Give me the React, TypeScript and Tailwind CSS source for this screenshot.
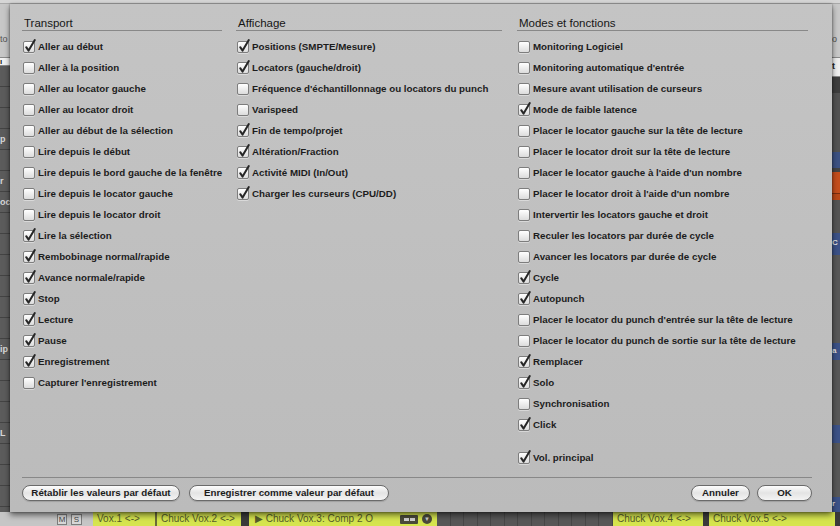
import React from 'react';

type Item = [string, boolean];

const transport: Item[] = [
  ['Aller au début', true],
  ['Aller à la position', false],
  ['Aller au locator gauche', false],
  ['Aller au locator droit', false],
  ['Aller au début de la sélection', false],
  ['Lire depuis le début', false],
  ['Lire depuis le bord gauche de la fenêtre', false],
  ['Lire depuis le locator gauche', false],
  ['Lire depuis le locator droit', false],
  ['Lire la sélection', true],
  ['Rembobinage normal/rapide', true],
  ['Avance normale/rapide', true],
  ['Stop', true],
  ['Lecture', true],
  ['Pause', true],
  ['Enregistrement', true],
  ["Capturer l'enregistrement", false],
];

const affichage: Item[] = [
  ['Positions (SMPTE/Mesure)', true],
  ['Locators (gauche/droit)', true],
  ["Fréquence d'échantillonnage ou locators du punch", false],
  ['Varispeed', false],
  ['Fin de tempo/projet', true],
  ['Altération/Fraction', true],
  ['Activité MIDI (In/Out)', true],
  ['Charger les curseurs (CPU/DD)', true],
];

const modes: Item[] = [
  ['Monitoring Logiciel', false],
  ["Monitoring automatique d'entrée", false],
  ['Mesure avant utilisation de curseurs', false],
  ['Mode de faible latence', true],
  ['Placer le locator gauche sur la tête de lecture', false],
  ['Placer le locator droit sur la tête de lecture', false],
  ["Placer le locator gauche à l'aide d'un nombre", false],
  ["Placer le locator droit à l'aide d'un nombre", false],
  ['Intervertir les locators gauche et droit', false],
  ['Reculer les locators par durée de cycle', false],
  ['Avancer les locators par durée de cycle', false],
  ['Cycle', true],
  ['Autopunch', true],
  ["Placer le locator du punch d'entrée sur la tête de lecture", false],
  ['Placer le locator du punch de sortie sur la tête de lecture', false],
  ['Remplacer', true],
  ['Solo', true],
  ['Synchronisation', false],
  ['Click', true],
];

const font = { fontFamily: '"Liberation Sans", Arial, sans-serif' };

const Checkbox: React.FC<{ checked: boolean }> = ({ checked }) => (
  <span className="relative w-[12px] h-[12px] shrink-0 rounded-[2px] border border-[#7d7d7d] bg-linear-to-b from-[#ffffff] to-[#dcdcdc] shadow-[0_1px_0_rgba(255,255,255,0.4)]">
    {checked && (
      <svg className="absolute left-[0px] top-[-3px] overflow-visible" width="12" height="14" viewBox="0 0 12 14">
        <path d="M2.2 8.2 L4.6 11.6 L10.8 1.0" fill="none" stroke="#262626" strokeWidth="2" strokeLinecap="round" strokeLinejoin="round" />
      </svg>
    )}
  </span>
);

const Row: React.FC<{ item: Item }> = ({ item }) => (
  <div className="flex items-center h-[21px] pl-[1px] gap-[3px]">
    <Checkbox checked={item[1]} />
    <span className="text-[9.75px] leading-[12px] font-bold text-[#1c1c1c] whitespace-nowrap">{item[0]}</span>
  </div>
);

const Column: React.FC<{ title: string; items: Item[]; width: string; extra?: Item }> = ({ title, items, width, extra }) => (
  <div className={`flex flex-col ${width}`}>
    <div className="h-[15px] border-b border-[#888888] pl-[2px] text-[11.5px] leading-[14px] text-[#161616]">{title}</div>
    <div className="mt-[5px] flex flex-col">
      {items.map((it) => (
        <Row key={it[0]} item={it} />
      ))}
      {extra && (
        <div className="mt-[12px]">
          <Row item={extra} />
        </div>
      )}
    </div>
  </div>
);

const Button: React.FC<{ label: string; width: string }> = ({ label, width }) => (
  <button
    className={`${width} h-[16px] rounded-full border border-[#6a6a6a] bg-linear-to-b from-[#fdfdfd] via-[#e4e4e4] to-[#f4f4f4] text-[9.75px] leading-[12px] font-bold text-[#1c1c1c] flex items-center justify-center shadow-[0_1px_1px_rgba(0,0,0,0.15)]`}
  >
    {label}
  </button>
);

const LeftStrip: React.FC = () => (
  <div className="w-[10px] flex flex-col shrink-0 overflow-hidden">
    <div className="h-[53px] bg-[#c7c7c7] flex flex-col">
      <div className="h-[30px]" />
      <span className="text-[9px] leading-[10px] text-[#555]">to</span>
    </div>
    <div className="h-[9px] bg-[#f2f2f2] border-y border-[#8a8a8a] text-[8px] leading-[7px] text-[#222] font-bold">ı</div>
    <div className="flex-1 bg-[#5c5c5c] flex flex-col">
      {['', '', '', 'p', '', 'r', 'oc', '', '', '', '', '', '', 'ip', '', '', '', 'L', '', '', ''].map((t, i) => (
        <div key={i} className="h-[21px] border-b border-[#444] text-[9px] leading-[20px] font-bold text-[#d8d8d8] whitespace-nowrap">
          {t}
        </div>
      ))}
    </div>
  </div>
);

const RightStrip: React.FC = () => (
  <div className="w-[8px] flex flex-col shrink-0 overflow-hidden">
    <div className="h-[53px] bg-[#c9c9c9] flex flex-col">
      <div className="h-[30px]" />
      <span className="text-[9px] leading-[10px] text-[#555]">o</span>
    </div>
    <div className="h-[20px] bg-[#f0f0f0] border-y border-[#8a8a8a] text-[9px] leading-[16px] font-bold text-[#222]">t</div>
    <div className="h-[16px] bg-[#3f3f3f]" />
    <div className="h-[59px] bg-[#535353]" />
    <div className="h-[16px] bg-[#3d5284]" />
    <div className="h-[4px] bg-[#444]" />
    <div className="h-[22px] bg-[#c54e1c] border-b border-[#7a2e10]" />
    <div className="h-[6px] bg-[#b94818]" />
    <div className="h-[33px] bg-[#555]" />
    <div className="h-[22px] bg-[#3c5288] text-[8px] leading-[20px] font-bold text-[#e6e6e6]">C</div>
    <div className="h-[88px] bg-[#585858]" />
    <div className="h-[17px] bg-[#3c5288] text-[8px] leading-[16px] font-bold text-[#e6e6e6]">a</div>
    <div className="h-[65px] bg-[#585858]" />
    <div className="h-[18px] bg-[#3c5288]" />
    <div className="h-[54px] bg-[#585858]" />
    <div className="flex-1 bg-[#3c5288] text-[8px] leading-[14px] font-bold text-[#e6e6e6]">r</div>
  </div>
);

const Region: React.FC<{ width: string; children?: React.ReactNode }> = ({ width, children }) => (
  <div className={`${width} h-full bg-[#d6e54f] text-[10px] leading-[14px] text-[#555c2a] whitespace-nowrap overflow-hidden pl-[4px] flex items-center`}>
    {children}
  </div>
);

const BottomBar: React.FC = () => (
  <div className="h-[14px] flex bg-[#c6c6c6]">
    <div className="w-[57px] h-full" />
    <div className="w-[10px] h-[11px] mt-[2px] border border-[#7d7d7d] bg-[#d8d8d8] text-[8px] leading-[9px] text-center text-[#444]">M</div>
    <div className="w-[4px]" />
    <div className="w-[11px] h-[11px] mt-[2px] border border-[#7d7d7d] bg-[#d8d8d8] text-[8px] leading-[9px] text-center text-[#444]">S</div>
    <div className="w-[11px]" />
    <Region width="w-[62px]">Vox.1 &lt;-&gt;</Region>
    <div className="w-[2px] h-full bg-[#6b6b3a]" />
    <Region width="w-[84px]">Chuck Vox.2 &lt;-&gt;</Region>
    <div className="w-[8px] h-full bg-[#3b3b3b]" />
    <div className="w-[188px] h-full bg-[#d6e54f] flex items-center pl-[6px] text-[10px] leading-[14px] text-[#555c2a] whitespace-nowrap">
      <span>▶ Chuck Vox.3: Comp 2 O</span>
      <span className="ml-auto w-[18px] h-[9px] bg-[#4a4a3a] rounded-[1px] flex items-center justify-center gap-[1px]">
        <span className="w-[5px] h-[3px] bg-[#d0d0d0]" />
        <span className="w-[5px] h-[3px] bg-[#d0d0d0]" />
      </span>
      <span className="ml-[4px] mr-[5px] w-[10px] h-[10px] rounded-full bg-[#4a4a3a] flex items-center justify-center text-[6px] leading-[6px] text-[#d0d0d0]">▼</span>
    </div>
    <div className="w-[176px] h-full bg-[#575757] flex">
      {Array.from({ length: 13 }).map((_, i) => (
        <div key={i} className="w-[14px] h-full border-r border-[#474747]" />
      ))}
    </div>
    <Region width="w-[90px]">Chuck Vox.4 &lt;-&gt;</Region>
    <div className="w-[6px] h-full bg-[#3b3b3b]" />
    <Region width="w-[126px]">Chuck Vox.5 &lt;-&gt;</Region>
    <div className="flex-1 h-full bg-[#3b3b3b]" />
  </div>
);

export default function App() {
  return (
    <div className="w-[840px] h-[526px] overflow-hidden flex flex-col bg-[#c6c6c6]" style={font}>
      <div className="h-[4px] bg-[#d6d6d6] border-b border-[#a9a9a9]" />
      <div className="h-[508px] flex">
        <LeftStrip />
        <div className="relative z-10 w-[822px] h-full flex flex-col bg-linear-to-b from-[#c4c4c4] to-[#bbbbbb] shadow-[0_3px_6px_rgba(0,0,0,0.55),0_0_2px_rgba(0,0,0,0.4)] pl-[12px] pt-[12px]">
          <div className="flex">
            <Column title="Transport" items={transport} width="w-[200px]" />
            <div className="w-[14px]" />
            <Column title="Affichage" items={affichage} width="w-[266px]" />
            <div className="w-[15px]" />
            <Column title="Modes et fonctions" items={modes} width="w-[291px]" extra={['Vol. principal', true]} />
          </div>
          <div className="mt-auto mr-[20px] border-t border-[#888888] pt-[7px] pb-[11px] flex items-center">
            <Button label="Rétablir les valeurs par défaut" width="w-[158px]" />
            <div className="w-[9px]" />
            <Button label="Enregistrer comme valeur par défaut" width="w-[200px]" />
            <div className="flex-1" />
            <Button label="Annuler" width="w-[59px]" />
            <div className="w-[7px]" />
            <Button label="OK" width="w-[55px]" />
          </div>
        </div>
        <RightStrip />
      </div>
      <BottomBar />
    </div>
  );
}
